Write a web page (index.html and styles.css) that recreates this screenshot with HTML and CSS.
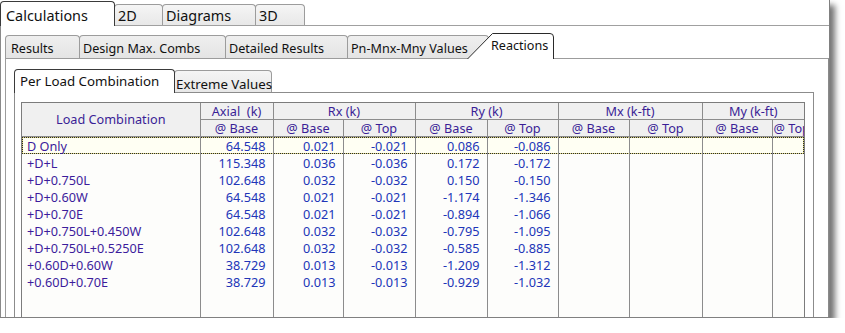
FILE: index.html
```html
<!doctype html>
<html lang="en">
<head>
  <meta charset="utf-8" />
  <title>Reactions</title>
  <link rel="stylesheet" href="styles.css">
</head>
<body>
  <div class="window">
    <div class="tabstrip top">
      <div class="tab sel w-calc">Calculations</div>
      <div class="tab w-2d">2D</div>
      <div class="tab w-diag">Diagrams</div>
      <div class="tab w-3d">3D</div>
    </div>

    <div class="panel p1">
      <div class="tabstrip mid">
        <div class="tab w-res">Results</div>
        <div class="tab w-dmc">Design Max. Combs</div>
        <div class="tab w-det">Detailed Results</div>
        <div class="tab w-pnm">Pn-Mnx-Mny Values</div>
        <div class="tab slant">
          <svg class="slant-bg" width="87" height="26" viewBox="0 0 87 26">
            <path d="M0.5 26 L25.5 0.5 L83 0.5 Q86.5 0.5 86.5 4 L86.5 26" fill="#fff" stroke="#2a2a2a" stroke-width="1"/>
          </svg>
          <span>Reactions</span>
        </div>
      </div>

      <div class="panel p2">
        <div class="tabstrip low">
          <div class="tab sel w-plc">Per Load Combination</div>
          <div class="tab w-ext">Extreme Values</div>
        </div>

        <div class="panel p3">
          <div class="grid">
            <table>
              <colgroup>
                <col style="width:178px"><col style="width:73px">
                <col style="width:70px"><col style="width:72px">
                <col style="width:72px"><col style="width:71px">
                <col style="width:71px"><col style="width:73px">
                <col style="width:70px"><col style="width:32px">
              </colgroup>
              <thead>
                <tr>
                  <th rowspan="2">Load Combination</th>
                  <th>Axial&nbsp; (k)</th>
                  <th colspan="2">Rx (k)</th>
                  <th colspan="2">Ry (k)</th>
                  <th colspan="2">Mx (k-ft)</th>
                  <th colspan="2">My (k-ft)</th>
                </tr>
                <tr>
                  <th>@ Base</th>
                  <th>@ Base</th><th>@ Top</th>
                  <th>@ Base</th><th>@ Top</th>
                  <th>@ Base</th><th>@ Top</th>
                  <th>@ Base</th><th class="cut">@ Top</th>
                </tr>
              </thead>
              <tbody>
                <tr class="focus"><td>D Only</td><td>64.548</td><td>0.021</td><td>-0.021</td><td>0.086</td><td>-0.086</td><td></td><td></td><td></td><td></td></tr>
                <tr><td>+D+L</td><td>115.348</td><td>0.036</td><td>-0.036</td><td>0.172</td><td>-0.172</td><td></td><td></td><td></td><td></td></tr>
                <tr><td>+D+0.750L</td><td>102.648</td><td>0.032</td><td>-0.032</td><td>0.150</td><td>-0.150</td><td></td><td></td><td></td><td></td></tr>
                <tr><td>+D+0.60W</td><td>64.548</td><td>0.021</td><td>-0.021</td><td>-1.174</td><td>-1.346</td><td></td><td></td><td></td><td></td></tr>
                <tr><td>+D+0.70E</td><td>64.548</td><td>0.021</td><td>-0.021</td><td>-0.894</td><td>-1.066</td><td></td><td></td><td></td><td></td></tr>
                <tr><td>+D+0.750L+0.450W</td><td>102.648</td><td>0.032</td><td>-0.032</td><td>-0.795</td><td>-1.095</td><td></td><td></td><td></td><td></td></tr>
                <tr><td>+D+0.750L+0.5250E</td><td>102.648</td><td>0.032</td><td>-0.032</td><td>-0.585</td><td>-0.885</td><td></td><td></td><td></td><td></td></tr>
                <tr><td>+0.60D+0.60W</td><td>38.729</td><td>0.013</td><td>-0.013</td><td>-1.209</td><td>-1.312</td><td></td><td></td><td></td><td></td></tr>
                <tr><td>+0.60D+0.70E</td><td>38.729</td><td>0.013</td><td>-0.013</td><td>-0.929</td><td>-1.032</td><td></td><td></td><td></td><td></td></tr>
                <tr class="filler"><td></td><td></td><td></td><td></td><td></td><td></td><td></td><td></td><td></td><td></td></tr>
              </tbody>
            </table>
          </div>
        </div>
      </div>
    </div>
  </div>
</body>
</html>
```

FILE: styles.css
```css
:root{
  --line:#8c8c8c;
  --tab-border:#9c9c9c;
  --head-ink:#3a1e96;
  --label-ink:#3c1c9c;
  --num-ink:#2135b8;
}

body{
  margin:0;
  background:#fff;
  font-family:"Noto Sans","Open Sans",sans-serif;
  color:#111;
}

/* ───────────── window frame ───────────── */
.window{
  width:830px;
  height:318px;
  box-sizing:border-box;
  display:flex;
  flex-direction:column;
  overflow:hidden;
  border-right:1px solid #808080;
  border-bottom:1px solid #808080;
  box-shadow:5px 5px 6px rgba(0,0,0,0.55);
}

/* ───────────── tab strips ───────────── */
.tabstrip{
  display:flex;
  align-items:flex-end;
  flex:none;
}
.tab{
  position:relative;
  box-sizing:border-box;
  flex:none;
  border:1px solid var(--tab-border);
  border-bottom:none;
  border-radius:4px 4px 0 0;
  background:linear-gradient(#f5f5f5,#e8e8e8);
  margin-right:-1px;
  white-space:nowrap;
  color:#111;
}
.tab.sel{
  z-index:1;
  background:#fff;
  border-color:#3a3a3a;
  margin-bottom:-1px;
}

.top{ height:25px; }
.top .tab{
  height:21px;
  font-size:14.4px;
  line-height:18px;
  padding:2px 0 0 3px;
}
.top .tab.sel{
  height:25px;
  padding:4px 0 0 5px;
  line-height:20px;
}
.w-calc{ width:115px; }
.w-2d{ width:49px; }
.w-diag{ width:94px; }
.w-3d{ width:50px; }

.mid{ height:32px; }
.mid .tab{
  height:23px;
  font-size:12.6px;
  line-height:16px;
  padding:5px 0 0 3px;
  background:linear-gradient(#efefef,#e4e4e4);
}
.mid .w-res{ width:75px; padding-left:5px; }
.w-dmc{ width:147px; }
.w-det{ width:123px; }
.w-pnm{ width:142px; }
.mid .tab.slant{
  z-index:2;
  width:87px;
  height:26px;
  margin-left:-21px;
  margin-bottom:-1px;
  border:none;
  background:none;
  padding:5px 0 0 24px;
}
.slant-bg{
  position:absolute;
  left:0;
  top:0;
}
.slant span{ position:relative; }

.low{ height:33px; }
.low .tab{
  height:22px;
  font-size:13.3px;
  line-height:17px;
  padding:5px 0 0 1px;
}
.low .tab.sel{
  height:24px;
  padding:2px 0 0 5px;
  line-height:18px;
}
.w-plc{ width:161px; }
.w-ext{ width:98px; }

/* ───────────── nested panels ───────────── */
.panel{
  flex:1;
  display:flex;
  flex-direction:column;
  background:#fff;
  min-height:0;
}
.p1{
  border-top:1px solid #a0a0a0;
  border-left:1px solid #8a8a8a;
  padding-left:4px;
}
.p2{
  border-top:1px solid var(--tab-border);
  border-left:1px solid var(--tab-border);
  border-right:1px solid #8a8a8a;
  padding:0 14px 0 8px;
}
.p3{
  border:1px solid var(--line);
  border-bottom:none;
  padding:9px 8px 0 6px;
}

/* ───────────── grid ───────────── */
.grid{
  flex:1;
  border:1px solid #7c7c7c;
  border-bottom:none;
  overflow:hidden;
  background:#fdfdfb;
}
table{
  width:782px;
  table-layout:fixed;
  border-collapse:collapse;
  border-style:hidden;
  font-size:12.7px;
}
th{
  height:16px;
  padding:0;
  line-height:15px;
  font-weight:normal;
  background:#f0f0f0;
  color:var(--head-ink);
  border:1px solid var(--line);
  white-space:nowrap;
  overflow:hidden;
}
th.cut{ text-align:left; padding-left:1px; }
td{
  height:17px;
  padding:0 7px 0 0;
  line-height:16px;
  text-align:right;
  color:var(--num-ink);
  border-left:1px solid var(--line);
  border-right:1px solid var(--line);
  white-space:nowrap;
}
td:first-child{
  text-align:left;
  padding-left:5px;
  color:var(--label-ink);
}
.focus td{
  background:
    repeating-linear-gradient(90deg,#2b2b2b 0 1px,#d9d27c 1px 2px) left top/100% 1px no-repeat,
    repeating-linear-gradient(90deg,#2b2b2b 0 1px,#d9d27c 1px 2px) left bottom/100% 1px no-repeat,
    #fffff3;
}
.focus td:first-child{
  background:
    repeating-linear-gradient(90deg,#2b2b2b 0 1px,#d9d27c 1px 2px) left top/100% 1px no-repeat,
    repeating-linear-gradient(90deg,#2b2b2b 0 1px,#d9d27c 1px 2px) left bottom/100% 1px no-repeat,
    repeating-linear-gradient(180deg,#2b2b2b 0 1px,#d9d27c 1px 2px) left top/1px 100% no-repeat,
    #fffff3;
}
.focus td:last-child{
  background:
    repeating-linear-gradient(90deg,#2b2b2b 0 1px,#d9d27c 1px 2px) left top/100% 1px no-repeat,
    repeating-linear-gradient(90deg,#2b2b2b 0 1px,#d9d27c 1px 2px) left bottom/100% 1px no-repeat,
    repeating-linear-gradient(180deg,#2b2b2b 0 1px,#d9d27c 1px 2px) right top/1px 100% no-repeat,
    #fffff3;
}
.filler td{ height:60px; }
```
